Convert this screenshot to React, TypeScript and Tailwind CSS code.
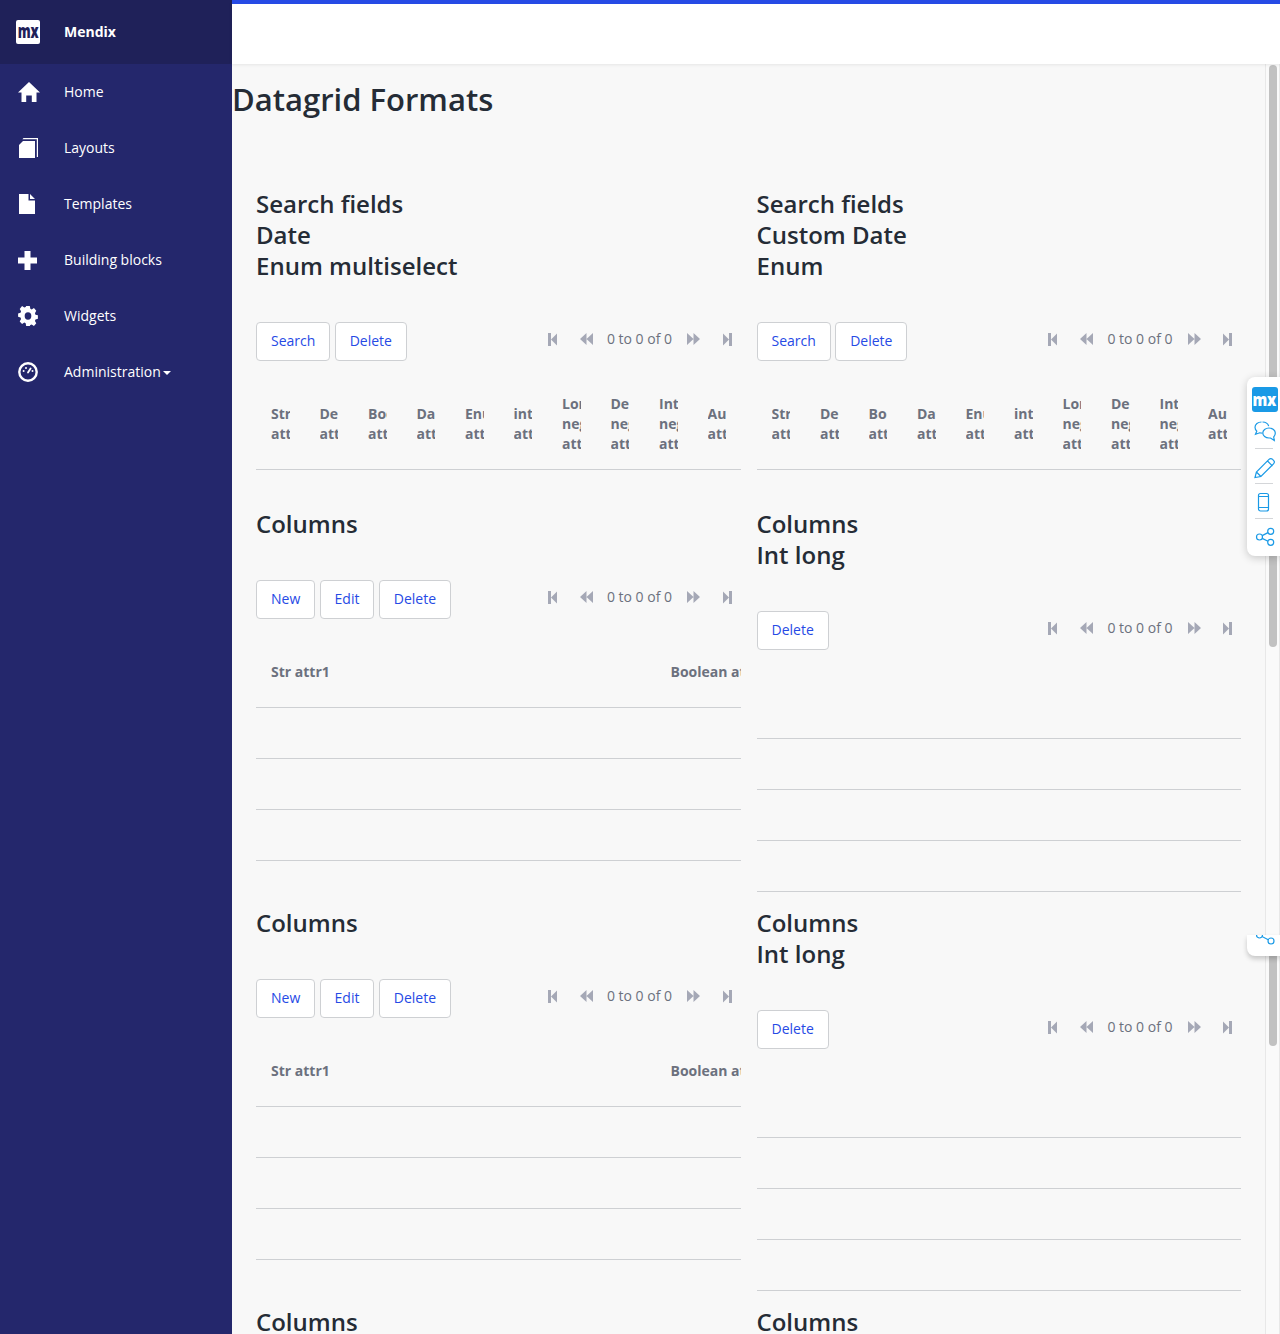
import React from "react";

const font = { fontFamily: '"Open Sans", sans-serif' };

function HomeIcon() {
  return (
    <svg width="22" height="20" viewBox="0 0 22 20" className="block">
      <path fillRule="evenodd" fill="#fff" d="M11 0L22 10.5H18.5V20H13.8V13.5H8.2V20H3.5V10.5H0z" />
    </svg>
  );
}

function BookIcon() {
  return (
    <svg width="19" height="20" viewBox="0 0 19 20" className="block">
      <path fill="#fff" d="M4 0H16V17H0V4z" transform="translate(0 3)" />
      <path fill="#fff" d="M4.5 0H19V19H17.8V1.2H3.4z" />
    </svg>
  );
}

function FileIcon() {
  return (
    <svg width="16" height="20" viewBox="0 0 16 20" className="block">
      <path fill="#fff" d="M0 0H9.5V6.5H16V20H0zM11 0L16 5H11z" />
    </svg>
  );
}

function PlusIcon() {
  return (
    <svg width="19" height="19" viewBox="0 0 19 19" className="block">
      <path fill="#fff" d="M6.5 0H12.5V6.5H19V12.5H12.5V19H6.5V12.5H0V6.5H6.5z" />
    </svg>
  );
}

function GearIcon() {
  return (
    <svg width="20" height="20" viewBox="0 0 20 20" className="block">
      <path
        fillRule="evenodd"
        fill="#fff"
        d="M8 0h4l.6 2.8 1.5.7 2.5-1.5 2.6 2.8-1.5 2.4.6 1.5 2.7.6v3.4l-2.7.7-.6 1.5 1.5 2.4-2.6 2.7-2.5-1.5-1.5.6L12 20H8l-.6-2.8-1.5-.6-2.5 1.5-2.6-2.7 1.5-2.4-.6-1.5L-1 10.8V7.4l2.7-.6.6-1.5L.8 2.9 3.4.1l2.5 1.5 1.500-.7zM10 6.300a3.700 3.700 0 1 0 0 7.400 3.700 3.700 0 0 0 0-7.400z"
        transform="translate(1 0) scale(0.9 1)"
      />
    </svg>
  );
}

function Gauge() {
  return (
    <svg width="20" height="20" viewBox="0 0 20 20" className="block">
      <circle cx="10" cy="10" r="8.7" fill="none" stroke="#fff" strokeWidth="2.4" />
      <path d="M10 10.5 L12.6 6.4" stroke="#fff" strokeWidth="1.8" strokeLinecap="round" />
      <circle cx="5.6" cy="9" r="1" fill="#fff" />
      <circle cx="8" cy="6" r="1" fill="#fff" />
      <circle cx="14.5" cy="9" r="1" fill="#fff" />
    </svg>
  );
}

function NavItem({ icon, label, caret }: { icon: React.ReactNode; label: string; caret?: boolean }) {
  return (
    <div className="flex h-[56px] items-center text-white">
      <div className="flex w-[64px] shrink-0 pl-[18px]">{icon}</div>
      <span className="text-[14px] font-medium leading-[20px]">{label}</span>
      {caret && <span className="ml-[2px] mt-[1px] h-0 w-0 border-x-[4px] border-t-[4px] border-x-transparent border-t-white" />}
    </div>
  );
}

function Sidebar() {
  return (
    <aside className="flex w-[232px] shrink-0 flex-col bg-[#24276c]">
      <div className="flex h-[64px] items-center bg-[#1f2159] pl-[16px]">
        <div className="flex h-[24px] w-[24px] items-center justify-center overflow-hidden rounded-[2px] bg-white pb-[2px]">
          <span className="inline-block shrink-0 scale-x-[0.68] text-[19px] font-extrabold leading-none tracking-[-0.5px] text-[#1f2159]">mx</span>
        </div>
        <span className="mb-[1px] ml-[24px] text-[14px] font-bold text-white">Mendix</span>
      </div>
      <NavItem icon={<HomeIcon />} label="Home" />
      <NavItem icon={<div className="pl-[1px]"><BookIcon /></div>} label="Layouts" />
      <NavItem icon={<div className="pl-[1px]"><FileIcon /></div>} label="Templates" />
      <NavItem icon={<PlusIcon />} label="Building blocks" />
      <NavItem icon={<GearIcon />} label="Widgets" />
      <NavItem icon={<Gauge />} label="Administration" caret />
    </aside>
  );
}

function Btn({ children }: { children: React.ReactNode }) {
  return (
    <button className="h-[39px] rounded-[4px] border border-[#ced0d3] bg-white px-[14px] pb-[2px] text-[14px] leading-[20px] text-[#264ae5]">
      {children}
    </button>
  );
}

function PageIcon({ w, h, d }: { w: number; h: number; d: string }) {
  return (
    <svg width={w} height={h} viewBox={`0 0 ${w} ${h}`} className="block shrink-0">
      <path d={d} fill="#a5a8b6" />
    </svg>
  );
}

function Pager() {
  return (
    <div className="flex h-[20px] items-center text-[14px] leading-[20px] text-[#6c717e]">
      <PageIcon w={9} h={13} d="M0 0h3v13H0zM3 6.5L9 .5v12z" />
      <div className="ml-[23px]">
        <PageIcon w={13} h={12} d="M0 6l6.5-6v12zM6.5 6L13 0v12z" />
      </div>
      <span className="ml-[14px]">0 to 0 of 0</span>
      <div className="ml-[15px]">
        <PageIcon w={13} h={12} d="M0 0l6.5 6-6.5 6zM6.5 0L13 6l-6.5 6z" />
      </div>
      <div className="ml-[22.5px]">
        <PageIcon w={9} h={13} d="M0 .5l6 6-6 6zM6 0h3v13H6z" />
      </div>
    </div>
  );
}

function Toolbar({ buttons }: { buttons: string[] }) {
  return (
    <div className="flex items-start justify-between">
      <div className="flex gap-[4.3px]">
        {buttons.map((b) => (
          <Btn key={b}>{b}</Btn>
        ))}
      </div>
      <div className="pr-[9px] pt-[7px]">
        <Pager />
      </div>
    </div>
  );
}

function Heading({ lines }: { lines: string[] }) {
  return (
    <h2 className="text-[24px] font-semibold leading-[31.2px] text-[#252c36]">
      {lines.map((l) => (
        <div key={l}>{l}</div>
      ))}
    </h2>
  );
}

function Th({ lines }: { lines: string[] }) {
  return (
    <div className="w-[48.5px] shrink-0 pl-[15px]">
      <div className="w-[18.5px] overflow-hidden whitespace-nowrap text-[14px] font-bold leading-[20px] text-[#6c717e]">
        {lines.map((l) => (
          <div key={l}>{l}</div>
        ))}
      </div>
    </div>
  );
}

function WideGrid() {
  const cols = [
    ["Str attr1", "attr"],
    ["Decimal", "attr"],
    ["Boolean", "attr"],
    ["Date", "attr"],
    ["Enum", "attr"],
    ["int", "attr"],
    ["Long", "neg", "attr"],
    ["Decimal", "neg", "attr"],
    ["Int", "neg", "attr"],
    ["Auto", "attr"],
  ];
  return (
    <div className="mt-[25px] flex h-[84px] items-center border-b border-[#ced0d3] pb-[7px]">
      {cols.map((c, i) => (
        <Th key={i} lines={c} />
      ))}
    </div>
  );
}

function Rows({ header }: { header: boolean }) {
  return (
    <div className="mt-[18px]">
      <div className="flex h-[71px] items-center justify-between overflow-hidden border-b border-[#ced0d3] pb-[2px] pl-[15px] text-[14px] font-bold text-[#6c717e]">
        {header && <span>Str attr1</span>}
        {header && <span className="w-[70px] overflow-hidden whitespace-nowrap">Boolean attr</span>}
      </div>
      <div className="h-[51px] border-b border-[#ced0d3]" />
      <div className="h-[51px] border-b border-[#ced0d3]" />
      <div className="h-[51px] border-b border-[#ced0d3]" />
    </div>
  );
}

function LeftColumns() {
  return (
    <div>
      <Heading lines={["Columns"]} />
      <div className="mt-[40.8px]">
        <Toolbar buttons={["New", "Edit", "Delete"]} />
      </div>
      <Rows header />
    </div>
  );
}

function RightColumns() {
  return (
    <div>
      <Heading lines={["Columns", "Int long"]} />
      <div className="mt-[40.8px]">
        <Toolbar buttons={["Delete"]} />
      </div>
      <Rows header={false} />
    </div>
  );
}

function SearchBlock({ lines }: { lines: string[] }) {
  return (
    <div>
      <Heading lines={lines} />
      <div className="mt-[40.8px]">
        <Toolbar buttons={["Search", "Delete"]} />
      </div>
      <WideGrid />
    </div>
  );
}

function Feedback() {
  return (
    <div className="absolute right-0 top-[377px] flex h-[179px] w-[33px] flex-col items-center rounded-l-[8px] bg-white pl-[2px] pt-[10px] shadow-[0_2px_8px_rgba(0,0,0,0.2)]">
      <div className="flex h-[25px] w-[26px] items-center justify-center overflow-hidden rounded-[3px] bg-[#1a9ae6] pb-[2px] text-white">
        <span className="inline-block shrink-0 scale-x-[0.82] text-[18px] font-extrabold leading-none tracking-[-0.5px]">mx</span>
      </div>
      <svg width="26" height="136" viewBox="0 0 26 136" fill="none" stroke="#1a9ae6" strokeWidth="1.2" className="mt-[2px] shrink-0">
        <path d="M9.5 8c-3.6 0-6.5 2.4-6.5 5.3 0 1.5.7 2.8 1.8 3.8L3.5 20.2l4.2-1.4c.9.3 1.6.4 2.6.4" />
        <path d="M10.5 8c3 0 5.5 1.8 6.2 4.2" />
        <path d="M17 14c-3.5 0-6.2 2.2-6.2 5s2.7 5 6.2 5h1.5l3.8 2.5-.6-3.5c1-1 1.6-2.4 1.6-4 0-2.800-2.800-5-6.300-5z" />
        <path d="M3 34.5h18" stroke="#d4d6d9" strokeWidth="1" />
        <path d="M3 63.5l1.4-5.500L17 45.400c1-1 2.600-1 3.600 0l.9.9c1 1 1 2.600 0 3.600L8.900 62.500z M4.400 58l4.500 4.500 M15.500 47l5 5" />
        <path d="M3 69.5h18" stroke="#d4d6d9" strokeWidth="1" />
        <rect x="6.5" y="79.5" width="10" height="17.5" rx="2" />
        <path d="M6.5 82.5h10M6.5 93.5h10" />
        <path d="M3 104.5h18" stroke="#d4d6d9" strokeWidth="1" />
        <circle cx="7.5" cy="123" r="3" />
        <circle cx="18.7" cy="117.3" r="3" />
        <circle cx="18.7" cy="128.3" r="3" />
        <path d="M10.2 121.6l5.8-3M10.2 124.4l5.8 2.8" />
      </svg>
    </div>
  );
}

function FeedbackSliver() {
  return (
    <div className="absolute right-0 top-[935px] h-[21px] w-[33px] overflow-hidden rounded-bl-[8px] bg-white pl-[9px] shadow-[0_3px_5px_rgba(0,0,0,0.2)]">
      <svg width="20" height="12" viewBox="0 0 20 12" fill="none" stroke="#1a9ae6" strokeWidth="1.2">
        <circle cx="3.5" cy="0" r="3" />
        <circle cx="15" cy="6" r="3" />
        <path d="M6 1.5l6.3 3.2" />
      </svg>
    </div>
  );
}

export default function App() {
  return (
    <div className="relative flex h-[1334px] w-[1280px] overflow-hidden" style={font}>
      <Sidebar />
      <div className="flex min-w-0 flex-1 flex-col bg-[#f8f8f8]">
        <header className="z-10 h-[64px] shrink-0 border-t-4 border-[#264ae5] bg-white shadow-[0_1px_3px_rgba(0,0,0,0.08)]" />
        <div className="flex min-h-0 flex-1">
          <main className="w-[1033px] shrink-0 overflow-hidden">
            <h1 className="mt-[13px] text-[31px] font-semibold leading-[44px] text-[#252c36]">Datagrid Formats</h1>
            <div className="mt-[67px] grid grid-cols-2 gap-x-[16px] px-[24px]">
              <SearchBlock lines={["Search fields", "Date", "Enum multiselect"]} />
              <SearchBlock lines={["Search fields", "Custom Date", "Enum"]} />
            </div>
            <div className="mt-[37.6px] grid grid-cols-2 gap-x-[16px] px-[24px]">
              <LeftColumns />
              <RightColumns />
            </div>
            <div className="mt-[14.8px] grid grid-cols-2 gap-x-[16px] px-[24px]">
              <LeftColumns />
              <RightColumns />
            </div>
            <div className="mt-[14.8px] grid grid-cols-2 gap-x-[16px] px-[24px]">
              <Heading lines={["Columns"]} />
              <Heading lines={["Columns"]} />
            </div>
          </main>
          <div className="w-[15px] shrink-0 border-x border-[#e8e8e8] bg-[#fafafa] pl-[3px] pt-[1px]">
            <div className="h-[582px] w-[8px] rounded-full bg-[#c1c1c1]" />
            <div className="mt-[289px] h-[110px] w-[8px] rounded-b-full bg-[#c1c1c1]" />
          </div>
        </div>
      </div>
      <Feedback />
      <FeedbackSliver />
    </div>
  );
}
